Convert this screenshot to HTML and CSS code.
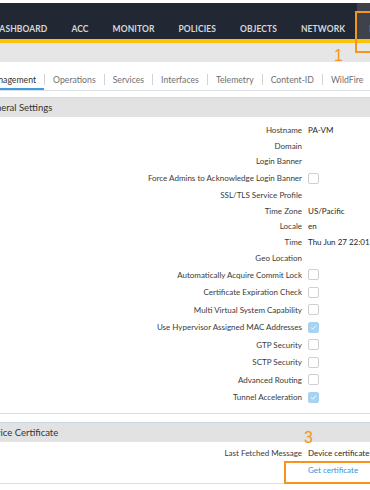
FILE: index.html
```html
<!DOCTYPE html>
<html lang="en">
<head>
<meta charset="utf-8">
<title>Device Setup</title>
<link rel="stylesheet" href="styles.css">
</head>
<body>
<div class="page">
  <div class="topline"></div>
  <nav class="navbar">
    <span class="nav-item first">DASHBOARD</span>
    <span class="nav-item">ACC</span>
    <span class="nav-item">MONITOR</span>
    <span class="nav-item">POLICIES</span>
    <span class="nav-item">OBJECTS</span>
    <span class="nav-item">NETWORK</span>
    <span class="nav-item active">DEVICE</span>
  </nav>
  <div class="crumb"></div>
  <div class="tabs">
    <span class="tab active first">Management</span><span class="sep"></span>
    <span class="tab">Operations</span><span class="sep"></span>
    <span class="tab">Services</span><span class="sep"></span>
    <span class="tab">Interfaces</span><span class="sep"></span>
    <span class="tab">Telemetry</span><span class="sep"></span>
    <span class="tab">Content-ID</span><span class="sep"></span>
    <span class="tab">WildFire</span><span class="sep"></span>
  </div>

  <section class="panel general">
    <div class="panel-head"><span class="head-text">General Settings</span></div>
    <div class="rows">
      <div class="row"><span class="label">Hostname</span><span class="value">PA-VM</span></div>
      <div class="row"><span class="label">Domain</span><span class="value"></span></div>
      <div class="row"><span class="label">Login Banner</span><span class="value"></span></div>
      <div class="row cb"><span class="label">Force Admins to Acknowledge Login Banner</span><span class="value"><span class="check"></span></span></div>
      <div class="row"><span class="label">SSL/TLS Service Profile</span><span class="value"></span></div>
      <div class="row"><span class="label">Time Zone</span><span class="value">US/Pacific</span></div>
      <div class="row"><span class="label">Locale</span><span class="value">en</span></div>
      <div class="row"><span class="label">Time</span><span class="value">Thu Jun 27 22:01</span></div>
      <div class="row"><span class="label">Geo Location</span><span class="value"></span></div>
      <div class="row cb"><span class="label">Automatically Acquire Commit Lock</span><span class="value"><span class="check"></span></span></div>
      <div class="row cb"><span class="label">Certificate Expiration Check</span><span class="value"><span class="check"></span></span></div>
      <div class="row cb"><span class="label">Multi Virtual System Capability</span><span class="value"><span class="check"></span></span></div>
      <div class="row cb"><span class="label">Use Hypervisor Assigned MAC Addresses</span><span class="value"><span class="check on"><svg viewBox="0 0 12 12" width="11" height="11"><path d="M3 6.2 L5 8.2 L9 3.8" fill="none" stroke="#ffffff" stroke-width="1.2" stroke-linecap="round" stroke-linejoin="round"/></svg></span></span></div>
      <div class="row cb"><span class="label">GTP Security</span><span class="value"><span class="check"></span></span></div>
      <div class="row cb"><span class="label">SCTP Security</span><span class="value"><span class="check"></span></span></div>
      <div class="row cb"><span class="label">Advanced Routing</span><span class="value"><span class="check"></span></span></div>
      <div class="row cb"><span class="label">Tunnel Acceleration</span><span class="value"><span class="check on"><svg viewBox="0 0 12 12" width="11" height="11"><path d="M3 6.2 L5 8.2 L9 3.8" fill="none" stroke="#ffffff" stroke-width="1.2" stroke-linecap="round" stroke-linejoin="round"/></svg></span></span></div>
    </div>
  </section>

  <section class="panel cert">
    <div class="panel-head"><span class="head-text">Device Certificate</span></div>
    <div class="rows">
      <div class="row"><span class="label">Last Fetched Message</span><span class="value">Device certificate</span></div>
      <div class="row link-row"><span class="label"></span><span class="value"><span class="link">Get certificate</span></span></div>
    </div>
  </section>

  <div class="annot box-one"></div>
  <div class="annot num num-one">1</div>
  <div class="annot num num-three">3</div>
  <div class="annot box-three"></div>
</div>
</body>
</html>
```

FILE: styles.css
```css
html, body {
  margin: 0;
  padding: 0;
  background: #ffffff;
}
body {
  font-family: Lato, "Open Sans", "Liberation Sans", sans-serif;
  color: #333333;
}
.page {
  position: relative;
  width: 370px;
  height: 490px;
  overflow: hidden;
  background: #ffffff;
}
.topline {
  height: 3px;
  background: #ffffff;
}
.navbar {
  display: flex;
  align-items: stretch;
  height: 36px;
  background: #212833;
  border-bottom: 4px solid #fbc40a;
  margin-left: -19px;
  white-space: nowrap;
}
.nav-item {
  display: flex;
  align-items: center;
  box-sizing: border-box;
  padding: 16px 12px 0;
  font-size: 8.5px;
  font-weight: 700;
  letter-spacing: 0.1px;
  color: #d4d7dc;
  flex: none;
}
.nav-item.active {
  background: #3d424b;
}
.crumb {
  height: 19px;
  background: #e6e6e6;
}
.tabs {
  display: flex;
  align-items: center;
  height: 28px;
  border-bottom: 1px solid #d9e1e7;
  white-space: nowrap;
  margin-left: -14px;
}
.tab {
  display: flex;
  align-items: center;
  height: 100%;
  box-sizing: border-box;
  padding: 7px 8px 0;
  font-size: 8.7px;
  color: #707070;
  flex: none;
}
.tab.active {
  color: #333333;
  border-bottom: 2px solid #3d9be0;
  padding-top: 9px;
}
.tab.first {
  padding-left: 0;
}
.sep {
  flex: none;
  width: 1px;
  height: 11px;
  margin-top: 7px;
  background: #d3d3d3;
}
.panel {
  border-bottom: 1px solid #dddddd;
}
.panel.general {
  margin-top: 6px;
}
.panel.cert {
  margin-top: 8px;
}
.panel-head {
  height: 19px;
  border-top: 1px solid #c9dbe7;
  background: #e2e2e2;
  display: flex;
  align-items: center;
  font-size: 9.5px;
  color: #333333;
  white-space: nowrap;
}
.general .panel-head .head-text {
  margin-left: -16px;
}
.cert .panel-head .head-text {
  margin-left: -16.5px;
}
.rows {
  display: flex;
  flex-direction: column;
}
.general .rows {
  padding: 5px 0 7px;
}
.cert .rows {
  padding: 3px 0 4px;
}
.row {
  display: flex;
  align-items: center;
  height: 15.8px;
  font-size: 8px;
  white-space: nowrap;
}
.row.cb {
  height: 17.5px;
}
.row.link-row {
  height: 18px;
}
.label {
  flex: none;
  width: 302px;
  display: flex;
  justify-content: flex-end;
  color: #3a3a3a;
}
.value {
  flex: none;
  margin-left: 6px;
  color: #262626;
  display: flex;
  align-items: center;
}
.check {
  display: flex;
  align-items: center;
  justify-content: center;
  width: 11px;
  height: 11px;
  box-sizing: border-box;
  border: 1px solid #cfcfcf;
  border-radius: 2px;
  background: #ffffff;
}
.check.on {
  background: #a8d2f2;
  border-color: #a8d2f2;
}
.check svg {
  display: block;
}
.link {
  color: #3a8fd8;
}
.annot {
  position: absolute;
}
.box-one {
  left: 355px;
  top: 11px;
  width: 30px;
  height: 42px;
  box-sizing: border-box;
  border: 2px solid #f7941d;
}
.num {
  font-family: "Liberation Sans", "DejaVu Sans", sans-serif;
  font-size: 16px;
  line-height: 16px;
  color: #f7941d;
}
.num-one {
  left: 334px;
  top: 48px;
}
.num-three {
  left: 304px;
  top: 430px;
}
.box-three {
  left: 284px;
  top: 461px;
  width: 100px;
  height: 23px;
  box-sizing: border-box;
  border: 2px solid #f7941d;
}
```
